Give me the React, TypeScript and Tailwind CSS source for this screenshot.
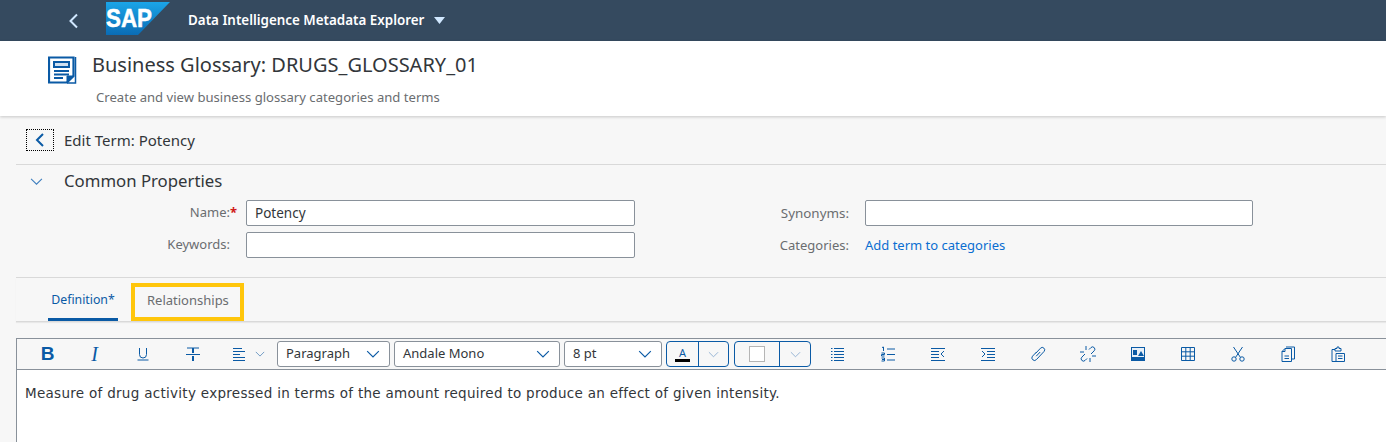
import React from "react";

const blue = "#0a5aa5";

const Chevron = ({ color = blue, size = 12 }: { color?: string; size?: number }) => (
  <svg width={size} height={size} viewBox="0 0 12 12" fill="none" stroke={color} strokeWidth="1">
    <path d="M1 3.5 6 8.5 11 3.5" />
  </svg>
);

const Icon = ({ children, w = 16, h = 16 }: { children: React.ReactNode; w?: number; h?: number }) => (
  <svg width={w} height={h} viewBox={`0 0 ${w} ${h}`} fill="none" stroke={blue} strokeWidth="1">
    {children}
  </svg>
);

const Select = ({ label, width }: { label: string; width: string }) => (
  <div className={`flex h-[26px] items-center justify-between rounded-[3px] border border-[#89919a] bg-white pl-[8px] pr-[9px] text-[13px] text-[#32363a] ${width}`}>
    <span>{label}</span>
    <Chevron size={14} />
  </div>
);

const TextField = ({ value, width }: { value?: string; width: string }) => (
  <div className={`flex h-[26px] items-center rounded-[2px] border border-[#89919a] bg-white pl-[8px] text-[13.5px] text-[#32363a] ${width}`}>
    {value}
  </div>
);

const ToolBtn = ({ w, children }: { w: string; children: React.ReactNode }) => (
  <div className={`flex h-full shrink-0 items-center justify-center ${w}`}>{children}</div>
);

const App = () => {
  return (
    <div className="h-[442px] w-[1386px] overflow-hidden bg-[#f7f7f7] font-['Noto_Sans','Open_Sans',sans-serif]">
      <header className="flex h-[41px] items-center bg-[#354a5f]">
        <svg className="ml-[67px]" width="12" height="16" viewBox="0 0 12 16" fill="none" stroke="#d1e8ff" strokeWidth="2">
          <path d="M10 1.5 3.5 8 10 14.5" />
        </svg>
        <svg className="mb-[4px] ml-[27px]" width="64" height="33" viewBox="0 0 64 33">
          <defs>
            <linearGradient id="sap" x1="0" y1="0" x2="0" y2="1">
              <stop offset="0" stopColor="#1ba5e8" />
              <stop offset="1" stopColor="#0a6cb5" />
            </linearGradient>
          </defs>
          <path d="M0 0H64L32 33H0Z" fill="url(#sap)" />
          <text x="0" y="25" fill="#fff" fontFamily="Liberation Sans" fontWeight="700" fontSize="26" textLength="46" lengthAdjust="spacingAndGlyphs" stroke="#fff" strokeWidth="0.5">SAP</text>
        </svg>
        <span className="ml-[18px] text-[13.4px] font-semibold text-white">Data Intelligence Metadata Explorer</span>
        <svg className="ml-[10px]" width="11" height="8" viewBox="0 0 11 8">
          <path d="M0 0H11L5.5 7Z" fill="#d1e8ff" />
        </svg>
      </header>

      <div className="flex h-[75px] bg-white pl-[48px] shadow-[0_1px_3px_rgba(0,0,0,0.2)]">
        <svg className="mt-[15px]" width="29" height="28" viewBox="0 0 29 28" fill="none" stroke={blue}>
          <path d="M1 1.5H25.5V20L19 26.500H1Z" strokeWidth="2.200" />
          <path d="M27.5 1V27H19" strokeWidth="1.500" />
          <path d="M6 6H21V11H6Z" fill="#cfe0f1" strokeWidth="2" />
          <path d="M6 15H21M6 18.500H21M6 22H15" strokeWidth="2" />
          <path d="M19 26V20H26Z" fill={blue} />
        </svg>
        <div className="ml-[15px]">
          <div className="mt-[11px] text-[20px] leading-[26px] text-[#32363a]">Business Glossary: DRUGS_GLOSSARY_01</div>
          <div className="ml-[4px] mt-[10px] text-[13.100px] leading-[18px] text-[#6a6d70]">Create and view business glossary categories and terms</div>
        </div>
      </div>

      <div className="pl-[16px]">
        <div className="flex h-[49px] items-center border-b border-[#d9d9d9] pl-[10px]">
          <div className="flex h-[22px] w-[28px] items-center justify-center border border-dotted border-black">
            <svg width="10" height="16" viewBox="0 0 10 16" fill="none" stroke={blue} strokeWidth="2">
              <path d="M8 2 2 8 8 14" />
            </svg>
          </div>
          <span className="ml-[10px] text-[15px] text-[#32363a]">Edit Term: Potency</span>
        </div>

        <div className="flex h-[35px] items-center pb-[3px] pl-[14px]">
          <Chevron size={13} color="#3f7fbf" />
          <span className="ml-[21px] text-[16.750px] text-[#32363a]">Common Properties</span>
        </div>

        <div className="grid h-[78px] grid-cols-[214px_16px_389px_214px_16px_388px] content-start items-center gap-y-[6px] border-b border-[#d9d9d9]">
          <div className="flex justify-end text-[13px] text-[#6a6d70]">
            <span>Name:</span>
          </div>
          <div className="text-[13px] font-bold text-[#d01818]">*</div>
          <TextField value="Potency" width="w-[389px]" />
          <div className="text-right text-[13.400px] text-[#6a6d70]">Synonyms:</div>
          <div />
          <TextField width="w-[388px]" />
          <div className="text-right text-[13px] text-[#6a6d70]">Keywords:</div>
          <div />
          <TextField width="w-[389px]" />
          <div className="pt-[1px] text-right text-[13px] text-[#6a6d70]">Categories:</div>
          <div />
          <div className="pt-[1px] text-[13px] text-[#0a6ed1]">Add term to categories</div>
        </div>

        <div className="flex h-[44px] border-b border-[#d9d9d9] pl-[32px] shadow-[0_1px_1px_rgba(0,0,0,0.06)]">
          <div className="flex h-[43px] w-[70px] items-center justify-center border-b-[3px] border-[#0a5aa5] pt-[5px] text-[12.300px] text-[#0a5aa5]">Definition*</div>
          <div className="relative ml-[29px] flex h-[43px] items-center pt-[2px] text-[13px] text-[#6a6d70]">
            Relationships
            <div className="absolute left-[-16px] top-[5px] h-[38px] w-[113px] border-[4px] border-[#ffc60b]" />
          </div>
        </div>

        <div className="mt-[16px] border-l border-t border-[#89919a]">
          <div className="flex h-[31px] items-center border-b border-[#89919a] pl-[7px]">
            <ToolBtn w="w-[47px]"><span className="font-['Liberation_Sans'] text-[19px] font-bold text-[#0a5aa5]">B</span></ToolBtn>
            <ToolBtn w="w-[47px]"><span className="font-['Liberation_Serif'] text-[20px] italic text-[#0a5aa5]">I</span></ToolBtn>
            <ToolBtn w="w-[50px]">
              <Icon w={14}>
                <path d="M3.5 2V8.5A3.5 3.5 0 0 0 10.500 8.500V2M1.500 14H12.500" />
              </Icon>
            </ToolBtn>
            <ToolBtn w="w-[49px]">
              <Icon>
                <path d="M2 2H14M1 8.500H15" />
                <path d="M8 2V7M8 10V15" strokeWidth="2" />
              </Icon>
            </ToolBtn>
            <ToolBtn w="w-[43px]">
              <Icon w={14}>
                <path d="M1 2.500H10M1 5.500H13M1 8.500H8M1 11.500H13M1 14.500H13" />
              </Icon>
            </ToolBtn>
            <div className="ml-[-5px] mr-[12px]"><Chevron size={10} color="#5b8cbc" /></div>
            <Select label="Paragraph" width="w-[113px]" />
            <div className="w-[4px]" />
            <Select label="Andale Mono" width="w-[166px]" />
            <div className="w-[4px]" />
            <Select label="8 pt" width="w-[98px]" />
            <div className="ml-[4px] flex h-[26px] w-[63px] rounded-[4px] border border-[#0a5aa5]">
              <div className="flex w-[32px] flex-col items-center justify-center border-r border-[#0a5aa5]">
                <span className="text-[11px] leading-[11px] text-[#0a5aa5]">A</span>
                <div className="mt-[1px] h-[3px] w-[15px] bg-black" />
              </div>
              <div className="flex flex-1 items-center justify-center"><Chevron size={11} color="#8fb0d2" /></div>
            </div>
            <div className="ml-[5px] flex h-[26px] w-[77px] rounded-[4px] border border-[#0a5aa5]">
              <div className="flex w-[45px] items-center justify-center border-r border-[#0a5aa5]">
                <div className="h-[16px] w-[16px] border border-[#b5b5b5] bg-white" />
              </div>
              <div className="flex flex-1 items-center justify-center"><Chevron size={11} color="#8fb0d2" /></div>
            </div>
            <div className="w-[2px]" />
            <ToolBtn w="w-[50px]">
              <Icon w={14}>
                <path d="M0 2.500H1.500M0 5.500H1.500M0 8.500H1.500M0 11.500H1.500M0 14.500H1.500M3 2.500H13M3 5.500H13M3 8.500H13M3 11.500H13M3 14.500H13" />
              </Icon>
            </ToolBtn>
            <ToolBtn w="w-[50px]">
              <Icon>
                <path d="M2 1.500 3.500 1V5M7 3H15M7 8.500H15M7 14H15M1.500 7H4.500V8.500H1.500V10H4.500M1.500 12H4.500V15H1.500M2 13.500H4.500" />
              </Icon>
            </ToolBtn>
            <ToolBtn w="w-[50px]">
              <Icon>
                <path d="M1 2.500H15M1 5.500H9M1 8.500H9M1 11.500H9M1 14.500H15M14 5 11 8 14 11" />
              </Icon>
            </ToolBtn>
            <ToolBtn w="w-[50px]">
              <Icon>
                <path d="M1 2.500H15M7 5.500H15M7 8.500H15M7 11.500H15M1 14.500H15M2 5 5 8 2 11" />
              </Icon>
            </ToolBtn>
            <ToolBtn w="w-[50px]">
              <Icon>
                <path d="M5.600 7.400 10.500 2.200A2.400 2.400 0 0 1 14 5.500L6.500 13.500A2.400 2.400 0 0 1 2.500 10.200L6.500 6M6.200 10.200 10.200 6" />
              </Icon>
            </ToolBtn>
            <ToolBtn w="w-[50px]">
              <Icon>
                <path d="M9 3.500 11 1.500A2.300 2.300 0 0 1 14.200 4.800L11 8M7 12.500 5 14.500A2.300 2.300 0 0 1 1.800 11.200L5 8M6 0V4M0 6H4M10 12V16M12 10H16" />
              </Icon>
            </ToolBtn>
            <ToolBtn w="w-[50px]">
              <svg width="14" height="14" viewBox="0 0 14 14">
                <path d="M0 0H14V14H0Z" fill={blue} />
                <path d="M1 1H13V10H1Z" fill="#e8f0f8" />
                <path d="M2 3H6V8H2Z" fill={blue} />
                <path d="M7 9 10 4 13 9Z" fill={blue} />
              </svg>
            </ToolBtn>
            <ToolBtn w="w-[50px]">
              <Icon w={14} h={14}>
                <path d="M.5.500H13.500V13.500H.5ZM4.800.500V13.500M9.200.500V13.500M.5 4.800H13.500M.5 9.200H13.500" />
              </Icon>
            </ToolBtn>
            <ToolBtn w="w-[50px]">
              <Icon w={14}>
                <circle cx="3" cy="13" r="2.200" />
                <circle cx="11" cy="13" r="2.200" />
                <path d="M4.500 11.500 11.500 1M9.500 11.500 2.500 1" />
              </Icon>
            </ToolBtn>
            <ToolBtn w="w-[50px]">
              <Icon w={14}>
                <path d="M1 5.500 4 2.500H10.500V15.500H1ZM4 2.500V5.500H1M3.500 10H8M3.500 12.500H8M5 1H13.500V13H10.500" />
              </Icon>
            </ToolBtn>
            <ToolBtn w="w-[50px]">
              <Icon w={14}>
                <path d="M4 3.500H1V15.500H5M4 2.500H6V1H8V2.500H10V5H4ZM5 7.500H13.500V15.500H5ZM7 10H11.500M7 12.500H11.500" />
              </Icon>
            </ToolBtn>
          </div>
          <div className="h-[72px] bg-white pl-[8px] pt-[14px] font-['DejaVu_Sans',sans-serif] text-[13.500px] leading-[18px] tracking-[0.29px] text-[#32363a]">
            Measure of drug activity expressed in terms of the amount required to produce an effect of given intensity.
          </div>
        </div>
      </div>
    </div>
  );
};

export default App;
